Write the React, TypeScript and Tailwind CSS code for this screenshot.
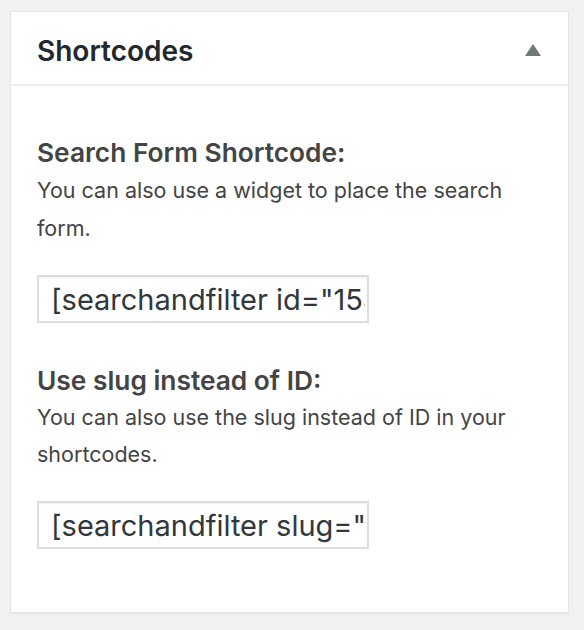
export default function App() {
  return (
    <div className="min-h-[630px] bg-[#f1f1f1] pt-[11px] pl-[10px] pr-[15px] pb-[16px] font-['Inter',sans-serif]">
      <div className="border border-[#e5e5e5] bg-white shadow-[0_1px_1px_rgba(0,0,0,0.04)]">
        <div className="flex h-[74px] items-center justify-between border-b-2 border-[#eeeeee] pt-[5px] pl-[26px] pr-[27px]">
          <h2 className="text-[28px] font-semibold leading-none text-[#23282d]">Shortcodes</h2>
          <svg width="16" height="12" viewBox="0 0 16 12" className="mb-[1px]">
            <path d="M8 0 L16 12 L0 12 Z" fill="#72777c" />
          </svg>
        </div>

        <div className="pl-[26px] pr-[26px] pt-[49px] pb-[63px]">
          <h4 className="text-[26.3px] font-semibold leading-[36px] text-[#444]">Search Form Shortcode:</h4>
          <p className="text-[21.5px] leading-[38px] text-[#444]">
            You can also use a widget to place the search form.
          </p>
          <input
            readOnly
            value={'[searchandfilter id="1543"]'}
            className="mt-[28px] block h-[48px] w-[332px] border-2 border-[#dddddd] bg-white pl-[12px] pr-[2px] text-[29px] text-[#32373c] shadow-[inset_0_1px_2px_rgba(0,0,0,0.07)] outline-none"
          />

          <h4 className="mt-[40px] text-[26.3px] font-semibold leading-[36px] text-[#444]">Use slug instead of ID:</h4>
          <p className="text-[21.5px] leading-[37px] text-[#444]">
            You can also use the slug instead of ID in your shortcodes.
          </p>
          <input
            readOnly
            value={'[searchandfilter slug=""]'}
            className="mt-[28px] block h-[48px] w-[332px] border-2 border-[#dddddd] bg-white pl-[12px] pr-[2px] text-[29px] text-[#32373c] shadow-[inset_0_1px_2px_rgba(0,0,0,0.07)] outline-none"
          />
        </div>
      </div>
    </div>
  )
}
